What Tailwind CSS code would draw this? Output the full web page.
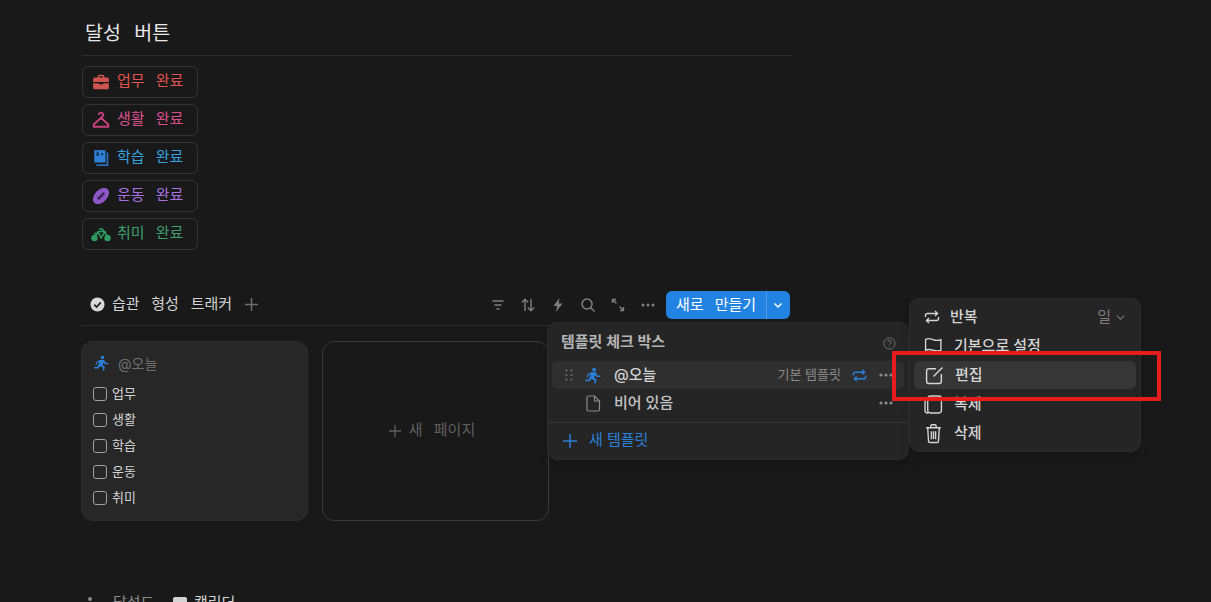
<!DOCTYPE html>
<html lang="ko">
<head>
  <meta charset="UTF-8" />
  <title>달성 버튼</title>
  <script src="https://cdn.jsdelivr.net/npm/@tailwindcss/browser@4"></script>
</head>
<body class="bg-[#191919] h-[602px] w-[1211px] overflow-hidden relative font-['Inter','Noto_Sans_CJK_KR',sans-serif] text-[#d4d4d4]">

  <main class="w-[710px] ml-[82px]">
    <!-- Heading -->
    <div class="h-[56px] pt-[20px] pl-[3px] border-b border-[#2f2f2f]">
      <h1 class="text-[19.5px] leading-[26px] text-[#e8e8e8] [word-spacing:8px]">달성 버튼</h1>
    </div>

    <!-- Achievement buttons -->
    <div class="mt-[10px] flex flex-col gap-[6px]">
      <div class="w-[116px] h-[32px] rounded-[6px] border border-[#333] flex items-center pl-[9px] gap-[7px] text-[15px] text-[#e0544f] [word-spacing:7px]">
        <svg class="w-[18px] h-[18px]" viewBox="0 0 16 16" fill="#cf5450"><path d="M5 4V3a1.500 1.500 0 0 1 1.500-1.500h3A1.500 1.500 0 0 1 11 3v1h2.500A1.500 1.500 0 0 1 15 5.500V8H1V5.500A1.500 1.500 0 0 1 2.500 4zm1.300 0h3.400V3.200a.4.400 0 0 0-.4-.4H6.700a.4.400 0 0 0-.4.400zM1 9h5v1h4V9h5v4a1.500 1.500 0 0 1-1.500 1.500h-11A1.500 1.500 0 0 1 1 13z"/></svg>
        <span class="-mt-[1px]">업무 완료</span>
      </div>
      <div class="w-[116px] h-[32px] rounded-[6px] border border-[#333] flex items-center pl-[9px] gap-[7px] text-[15px] text-[#d9508f] [word-spacing:7px]">
        <svg class="w-[18px] h-[18px]" viewBox="0 0 16 16" fill="none" stroke="#c9427f" stroke-width="1.600"><path d="M6 3.500a2 2 0 1 1 3 1.700L8 6 1.500 12v2h13v-2L8 6"/></svg>
        <span class="-mt-[1px]">생활 완료</span>
      </div>
      <div class="w-[116px] h-[32px] rounded-[6px] border border-[#333] flex items-center pl-[9px] gap-[7px] text-[15px] text-[#36a3e0] [word-spacing:7px]">
        <svg class="w-[18px] h-[18px]" viewBox="0 0 16 16"><path d="M13 3h1.500v12H4v-1.500h9z" fill="#2a6fc0"/><path d="M2 1h10v11H2z" fill="#2f7fd6"/><path d="M4 6l1-3 1 3M8 4.500h2M9 3.500v2" stroke="#123" stroke-width=".9" fill="none"/></svg>
        <span class="-mt-[1px]">학습 완료</span>
      </div>
      <div class="w-[116px] h-[32px] rounded-[6px] border border-[#333] flex items-center pl-[9px] gap-[7px] text-[15px] text-[#a970e0] [word-spacing:7px]">
        <svg class="w-[18px] h-[18px]" viewBox="0 0 16 16"><ellipse cx="8" cy="8" rx="8.500" ry="5.500" transform="rotate(-45 8 8)" fill="#8f56c8"/><path d="M5 11l6-6M5 8.500l2.500 2.500M7 6.800l2.500 2.500M9 5l2 2" stroke="#2b1c3a" stroke-width="1"/></svg>
        <span class="-mt-[1px]">운동 완료</span>
      </div>
      <div class="w-[116px] h-[32px] rounded-[6px] border border-[#333] flex items-center pl-[8px] gap-[6px] text-[15px] text-[#3d9e6b] [word-spacing:7px]">
        <svg class="w-[20px] h-[17px]" viewBox="0 0 20 16" fill="none"><circle cx="3.500" cy="11.500" r="3.200" fill="#2f9a60"/><circle cx="16.500" cy="11.500" r="3.200" fill="#2f9a60"/><path d="M3.500 11.500 7 5h7l2.500 6.500M7 5l3 6.500L14 5M8 2.500h3.500L12.500 5M3 7h5" stroke="#2f9a60" stroke-width="1.500"/></svg>
        <span class="-mt-[1px]">취미 완료</span>
      </div>
    </div>

    <!-- Database title + toolbar -->
    <div class="mt-[37px] h-[39px] border-b border-[#2f2f2f] flex items-center pb-[3px]">
      <svg class="w-[15px] h-[15px] ml-[8px]" viewBox="0 0 16 16"><circle cx="8" cy="8" r="7.500" fill="#d9d9d9"/><path d="M4.500 8.200 7 10.700l4.500-5" stroke="#222" stroke-width="1.800" fill="none"/></svg>
      <span class="ml-[7px] text-[15px] text-[#d4d4d4] [word-spacing:7.500px]">습관 형성 트래커</span>
      <svg class="w-[13px] h-[13px] ml-[13px]" viewBox="0 0 13 13" stroke="#6f6f6f" stroke-width="1.500"><path d="M6.500 0v13M0 6.500h13"/></svg>
      <div class="ml-auto flex items-center mr-[2px]">
        <div class="flex items-center gap-[14px] mr-[10px] text-[#7f7f7f]">
          <svg class="w-[16px] h-[16px]" viewBox="0 0 16 16" stroke="currentColor" stroke-width="1.400" fill="none"><path d="M2.500 4h11M4.500 8h7M6.500 12h3"/></svg>
          <svg class="w-[16px] h-[16px]" viewBox="0 0 16 16" stroke="currentColor" stroke-width="1.400" fill="none"><path d="M5 14V2.500M1.800 5.500 5 2.300l3.200 3.200M11 2v11.500M7.800 10.500l3.200 3.200 3.200-3.200"/></svg>
          <svg class="w-[16px] h-[16px]" viewBox="0 0 16 16" fill="currentColor"><path d="M9.500 1 3.500 9h3.700L6 15l6.500-8.500H8.700z"/></svg>
          <svg class="w-[16px] h-[16px]" viewBox="0 0 16 16" stroke="currentColor" stroke-width="1.500" fill="none"><circle cx="7" cy="7" r="5"/><path d="m10.500 10.500 4 4"/></svg>
          <svg class="w-[16px] h-[16px]" viewBox="0 0 16 16" stroke="currentColor" stroke-width="1.400" fill="none"><path d="M2.500 6V2.500H6M2.500 2.500l4 4M13.500 10v3.500H10M13.500 13.500l-4-4"/></svg>
          <svg class="w-[16px] h-[16px]" viewBox="0 0 16 16" fill="currentColor"><circle cx="3" cy="8" r="1.500"/><circle cx="8" cy="8" r="1.500"/><circle cx="13" cy="8" r="1.500"/></svg>
        </div>
        <div class="h-[28px] w-[124px] rounded-[6px] bg-[#2383e2] flex items-center text-white">
          <span class="w-[101px] text-center text-[15px] [word-spacing:7px] border-r border-white/20 leading-[28px]">새로 만들기</span>
          <svg class="w-[10px] h-[10px] ml-[6px]" viewBox="0 0 10 10" stroke="white" stroke-width="1.500" fill="none"><path d="M1.500 3.500 5 7l3.500-3.500"/></svg>
        </div>
      </div>
    </div>

    <!-- Gallery -->
    <div class="mt-[15px] -ml-[1px] flex gap-[14px]">
      <div class="w-[227px] h-[180px] rounded-[12px] bg-[#272727] border border-[#2f2f2f] pt-[10px] px-[11px]">
        <div class="flex items-center gap-[9px] h-[22px] text-[14px] text-[#6f6f6f]">
          <svg class="w-[16px] h-[16px]" viewBox="0 0 16 16" fill="#2a7fd8"><circle cx="9.500" cy="2.500" r="1.800"/><path d="M7 5h4l2 3h2.500v1.300H12L10.500 7.500 9.500 10l2.500 2-1 3.500H9.500l.5-2.800L7 11l-1.500 2.500H1V12h3.500l2-5-2 .5-1 2.500H2.500l1-3.300z"/></svg>
          <span>@오늘</span>
        </div>
        <ul class="mt-[10px] flex flex-col gap-[6px] text-[13px] text-[#d4d4d4]">
          <li class="h-[20px] flex items-center gap-[5px]"><span class="w-[14px] h-[14px] rounded-[3px] border border-[#a0a0a0]"></span><span class="-mt-[1px]">업무</span></li>
          <li class="h-[20px] flex items-center gap-[5px]"><span class="w-[14px] h-[14px] rounded-[3px] border border-[#a0a0a0]"></span><span class="-mt-[1px]">생활</span></li>
          <li class="h-[20px] flex items-center gap-[5px]"><span class="w-[14px] h-[14px] rounded-[3px] border border-[#a0a0a0]"></span><span class="-mt-[1px]">학습</span></li>
          <li class="h-[20px] flex items-center gap-[5px]"><span class="w-[14px] h-[14px] rounded-[3px] border border-[#a0a0a0]"></span><span class="-mt-[1px]">운동</span></li>
          <li class="h-[20px] flex items-center gap-[5px]"><span class="w-[14px] h-[14px] rounded-[3px] border border-[#a0a0a0]"></span><span class="-mt-[1px]">취미</span></li>
        </ul>
      </div>
      <div class="w-[227px] h-[180px] rounded-[12px] border border-[#3a3a3a] flex items-center justify-center gap-[8px] pr-[7px] text-[15px] text-[#5f5f5f] [word-spacing:7px]">
        <svg class="w-[12px] h-[12px]" viewBox="0 0 12 12" stroke="#5f5f5f" stroke-width="1.300"><path d="M6 0v12M0 6h12"/></svg>
        <span class="-mt-[1px]">새 페이지</span>
      </div>
    </div>

    <!-- Next section, cut by the window -->
    <div class="mt-[72px] flex items-center h-[20px] text-[15px] leading-[20px] text-[#9a9a9a]">
      <svg class="w-[14px] h-[14px] ml-[1px]" viewBox="0 0 14 14" fill="#8a8a8a"><circle cx="7" cy="3" r="2"/></svg>
      <span class="ml-[16px] w-[60px] text-[#8a8a8a] whitespace-nowrap">달성도</span>
      <svg class="w-[14px] h-[14px]" viewBox="0 0 14 14"><rect x="0" y="1" width="14" height="12" rx="2" fill="#d4d4d4"/></svg>
      <span class="ml-[7px] text-[#d4d4d4]">캘린더</span>
    </div>
  </main>

  <!-- Template popover -->
  <div class="absolute left-[547px] top-[322px] w-[362px] h-[138px] rounded-[10px] bg-[#252525] border border-[#2c2c2c] shadow-lg z-10">
    <div class="h-[38px] flex items-center justify-between pl-[13px] pr-[12px]">
      <span class="text-[15px] font-semibold text-[#b4b4b4]">템플릿 체크 박스</span>
      <svg class="w-[13px] h-[13px] mt-[2px]" viewBox="0 0 14 14" fill="none" stroke="#7a7a7a"><circle cx="7" cy="7" r="6"/><path d="M5.200 5.500a1.800 1.800 0 1 1 2.600 1.600c-.6.300-.8.700-.8 1.300M7 10v.8"/></svg>
    </div>
    <div class="mx-[4px] h-[28px] rounded-[5px] bg-[#2f2f2f] flex items-center pl-[13px] pr-[10px]">
      <svg class="w-[8px] h-[12px]" viewBox="0 0 8 12" fill="#6f6f6f"><circle cx="1.500" cy="1.500" r="1.100"/><circle cx="6.500" cy="1.500" r="1.100"/><circle cx="1.500" cy="6" r="1.100"/><circle cx="6.500" cy="6" r="1.100"/><circle cx="1.500" cy="10.500" r="1.100"/><circle cx="6.500" cy="10.500" r="1.100"/></svg>
      <svg class="w-[17px] h-[17px] ml-[11px]" viewBox="0 0 16 16" fill="#2a7fd8"><circle cx="9.500" cy="2.500" r="1.800"/><path d="M7 5h4l2 3h2.500v1.300H12L10.500 7.500 9.500 10l2.500 2-1 3.500H9.500l.5-2.800L7 11l-1.500 2.500H1V12h3.500l2-5-2 .5-1 2.500H2.500l1-3.300z"/></svg>
      <span class="ml-[13px] text-[15px] font-medium text-[#d4d4d4]">@오늘</span>
      <span class="ml-auto text-[13px] text-[#8a8a8a]">기본 템플릿</span>
      <svg class="w-[15px] h-[15px] ml-[11px]" viewBox="0 0 16 16" fill="none" stroke="#2a7fd8" stroke-width="1.500"><path d="M1.500 8V6.500A2 2 0 0 1 3.500 4.500h10M11 2l2.500 2.500L11 7M14.500 8v1.500a2 2 0 0 1-2 2h-10M5 9l-2.500 2.500L5 14"/></svg>
      <svg class="w-[16px] h-[16px] ml-[11px]" viewBox="0 0 16 16" fill="#8a8a8a"><circle cx="3" cy="8" r="1.600"/><circle cx="8" cy="8" r="1.600"/><circle cx="13" cy="8" r="1.600"/></svg>
    </div>
    <div class="mx-[4px] h-[28px] flex items-center pl-[34px] pr-[10px]">
      <svg class="w-[15px] h-[17px]" viewBox="0 0 15 17" fill="none" stroke="#8a8a8a" stroke-width="1.200"><path d="M2.500 1h6l5 5v8.500a1.500 1.500 0 0 1-1.500 1.500H2.500A1.500 1.500 0 0 1 1 14.500v-12A1.500 1.500 0 0 1 2.500 1zM8.500 1v5h5"/></svg>
      <span class="ml-[13px] text-[15px] font-medium text-[#c4c4c4]">비어 있음</span>
      <svg class="w-[16px] h-[16px] ml-auto" viewBox="0 0 16 16" fill="#8a8a8a"><circle cx="3" cy="8" r="1.600"/><circle cx="8" cy="8" r="1.600"/><circle cx="13" cy="8" r="1.600"/></svg>
    </div>
    <div class="mt-[5px] border-t border-[#353535] h-[37px] flex items-center pl-[15px] text-[15px] text-[#2a7fd8]">
      <svg class="w-[14px] h-[14px]" viewBox="0 0 14 14" stroke="#2a7fd8" stroke-width="1.500"><path d="M7 0v14M0 7h14"/></svg>
      <span class="ml-[12px] -mt-[1px]">새 템플릿</span>
    </div>
  </div>

  <!-- Context menu -->
  <div class="absolute left-[909px] top-[298px] w-[232px] h-[154px] rounded-[10px] bg-[#252525] border border-[#2c2c2c] shadow-lg z-10 pt-[4px] px-[4px] text-[15px] font-medium text-[#d4d4d4]">
    <div class="h-[28px] flex items-center pl-[10px] pr-[11px]">
      <svg class="w-[16px] h-[16px]" viewBox="0 0 16 16" fill="none" stroke="#d4d4d4" stroke-width="1.400"><path d="M1.500 8V6.500A2 2 0 0 1 3.500 4.500h10M11 2l2.500 2.500L11 7M14.500 8v1.500a2 2 0 0 1-2 2h-10M5 9l-2.500 2.500L5 14"/></svg>
      <span class="ml-[10px]">반복</span>
      <span class="ml-auto text-[#7f7f7f] font-normal">일</span>
      <svg class="w-[9px] h-[9px] ml-[5px]" viewBox="0 0 10 10" fill="none" stroke="#7f7f7f" stroke-width="1.200"><path d="M1 3l4 4 4-4"/></svg>
    </div>
    <div class="h-[30px] flex items-center pl-[10px]">
      <svg class="w-[19px] h-[19px]" viewBox="0 0 18 18" fill="none" stroke="#d4d4d4" stroke-width="1.300"><path d="M1.500 17V2.500c2-1.500 4-1.200 7 0s5 1 7.500 0v10c-2.500 1.200-4.500 1-7.500 0s-5-1-7 0"/></svg>
      <span class="ml-[11px]">기본으로 설정</span>
    </div>
    <div class="h-[28px] rounded-[6px] bg-[#363636] flex items-center pl-[11px]">
      <svg class="w-[19px] h-[19px]" viewBox="0 0 18 18" fill="none" stroke="#d4d4d4" stroke-width="1.400"><path d="M10.500 2.500H3.500a2 2 0 0 0-2 2v10a2 2 0 0 0 2 2h10a2 2 0 0 0 2-2V7.500M8 10 16.500 1.500"/></svg>
      <span class="ml-[11px]">편집</span>
    </div>
    <div class="h-[30px] flex items-center pl-[10px]">
      <svg class="w-[19px] h-[19px]" viewBox="0 0 18 18" fill="none" stroke="#d4d4d4" stroke-width="1.300"><path d="M3.500 3.500H3a2 2 0 0 0-2 2V15a2 2 0 0 0 2 2h1"/><rect x="3.500" y="1" width="13" height="16" rx="2.500"/></svg>
      <span class="ml-[11px]">복제</span>
    </div>
    <div class="h-[28px] flex items-center pl-[10px]">
      <svg class="w-[19px] h-[21px]" viewBox="0 0 18 18" preserveAspectRatio="none" fill="none" stroke="#d4d4d4" stroke-width="1.300"><path d="M2 4h14M6.500 4V2.500A1 1 0 0 1 7.500 1.500h3a1 1 0 0 1 1 1V4M3.500 4l.8 11.500a1.500 1.500 0 0 0 1.500 1.300h6.400a1.500 1.500 0 0 0 1.500-1.300L14.500 4M7 7v7M9 7v7M11 7v7"/></svg>
      <span class="ml-[11px]">삭제</span>
    </div>
  </div>

  <!-- Red annotation box -->
  <div class="absolute left-[892px] top-[351px] w-[269px] h-[50px] border-[4px] border-[#e71c1c] z-20"></div>
</body>
</html>
